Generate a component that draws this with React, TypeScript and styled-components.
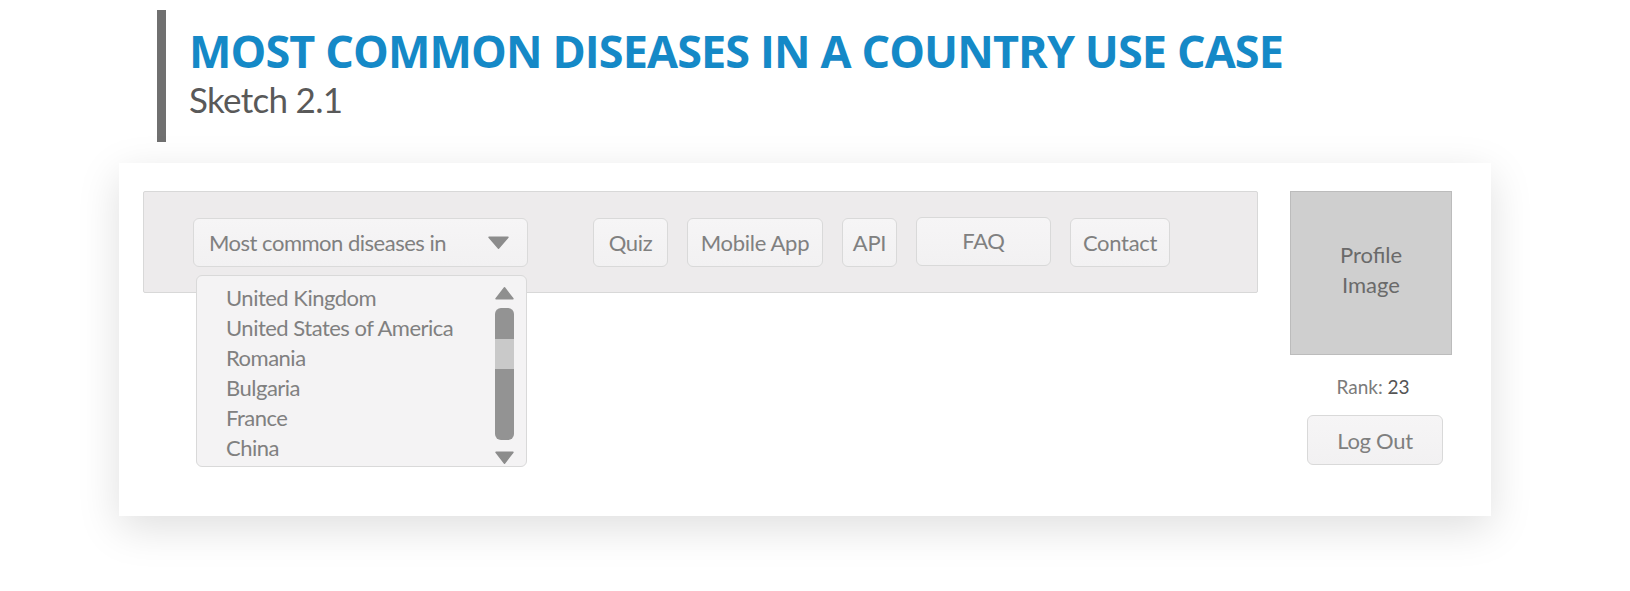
import React from "react";
import styled, { createGlobalStyle } from "styled-components";

const GlobalStyle = createGlobalStyle`
  html, body {
    margin: 0;
    padding: 0;
    background: #ffffff;
  }
  body {
    font-family: Lato, "Open Sans", sans-serif;
    color: #7f7f7f;
  }
  * { box-sizing: border-box; }
`;

const Page = styled.div`
  display: flex;
  flex-direction: column;
  align-items: flex-start;
  padding-top: 10px;
  width: 1630px;
  height: 591px;
  overflow: hidden;
`;

const Header = styled.header`
  margin-left: 157px;
  height: 132px;
  border-left: 9px solid #707070;
  padding-left: 23px;
  display: flex;
  flex-direction: column;
`;

const Title = styled.h1`
  margin: 18px 0 0 0;
  font-family: "Open Sans", sans-serif;
  font-weight: 700;
  font-size: 45px;
  line-height: 46px;
  color: #1589c7;
  letter-spacing: -0.9px;
  white-space: nowrap;
`;

const Subtitle = styled.div`
  margin-top: 8px;
  font-family: Lato, sans-serif;
  font-size: 35px;
  line-height: 35px;
  color: #595959;
  letter-spacing: -0.7px;
`;

const Card = styled.main`
  margin: 21px 0 0 119px;
  width: 1372px;
  height: 353px;
  background: #ffffff;
  box-shadow: 0 12px 40px rgba(0, 0, 0, 0.13);
  padding: 28px 0 0 24px;
  display: flex;
  align-items: flex-start;
  gap: 32px;
`;

const Nav = styled.nav`
  width: 1115px;
  height: 102px;
  background: #edebec;
  border: 1px solid #d8d8d8;
  border-radius: 2px;
  padding: 26px 0 0 49px;
  display: flex;
  align-items: flex-start;
`;

const SelectWrap = styled.div`
  position: relative;
  margin-right: 65px;
`;

const Select = styled.div`
  width: 335px;
  height: 49px;
  background: linear-gradient(#f6f5f6, #f2f1f2);
  border: 1px solid #dadada;
  border-radius: 6px;
  padding: 0 18px 0 15px;
  display: flex;
  align-items: center;
  justify-content: space-between;
  font-size: 22px;
  letter-spacing: -0.5px;
  color: #808080;
`;

const Triangle = styled.svg`
  display: block;
  flex: none;
`;

const DropList = styled.div`
  position: absolute;
  top: 57px;
  left: 3px;
  width: 331px;
  height: 192px;
  background: #f4f3f4;
  border: 1px solid #d9d9d9;
  border-radius: 6px;
  display: flex;
  justify-content: space-between;
  z-index: 2;
`;

const Items = styled.ul`
  list-style: none;
  margin: 0;
  padding: 7px 0 0 29px;
`;

const Item = styled.li`
  font-size: 22px;
  line-height: 30px;
  letter-spacing: -0.5px;
  color: #808080;
  white-space: nowrap;
`;

const ScrollCol = styled.div`
  width: 20px;
  margin-right: 12px;
  padding-top: 11px;
  display: flex;
  flex-direction: column;
  align-items: center;
`;

const Thumb = styled.div`
  margin: 8px 0 11px;
  width: 19px;
  height: 132px;
  border-radius: 6px;
  background: linear-gradient(
    #939393 0px,
    #939393 31px,
    #c9c9c9 31px,
    #c9c9c9 61px,
    #939393 61px,
    #939393 100%
  );
`;

const Buttons = styled.div`
  display: flex;
  gap: 19px;
`;

const NavButton = styled.div<{ $w: number; $lift?: boolean }>`
  width: ${(p) => p.$w}px;
  height: 49px;
  margin-top: ${(p) => (p.$lift ? -1 : 0)}px;
  padding-bottom: ${(p) => (p.$lift ? 3 : 0)}px;
  background: linear-gradient(#f6f5f6, #f2f1f2);
  border: 1px solid #d9d9d9;
  border-radius: 6px;
  display: flex;
  align-items: center;
  justify-content: center;
  font-size: 22px;
  letter-spacing: -0.3px;
  color: #808080;
  white-space: nowrap;
`;

const Side = styled.aside`
  width: 162px;
  display: flex;
  flex-direction: column;
  align-items: center;
`;

const ProfileBox = styled.div`
  width: 162px;
  height: 164px;
  background: #cfcfcf;
  border: 1px solid #bcbcbc;
  display: flex;
  align-items: center;
  justify-content: center;
  text-align: center;
  padding-bottom: 7px;
  font-size: 22px;
  line-height: 30px;
  color: #6a6a6a;
`;

const Rank = styled.div`
  margin-top: 20px;
  font-size: 19px;
  line-height: 24px;
  color: #7b7b7b;
  padding-left: 4px;
`;

const RankValue = styled.span`
  color: #555555;
`;

const LogOut = styled.div`
  margin: 16px 0 0 8px;
  width: 136px;
  height: 50px;
  background: linear-gradient(#f6f5f6, #f2f1f2);
  border: 1px solid #d9d9d9;
  border-radius: 6px;
  display: flex;
  align-items: center;
  justify-content: center;
  font-size: 22px;
  letter-spacing: -0.3px;
  color: #7f7f7f;
`;

const DownTri = ({ w, h }: { w: number; h: number }) => (
  <Triangle width={w} height={h} viewBox={`0 0 ${w} ${h}`}>
    <path
      d={`M1 1.2 L${w - 1} 1.2 L${w / 2} ${h - 0.8} Z`}
      fill="#8c8c8c"
      stroke="#8c8c8c"
      strokeWidth="1.4"
      strokeLinejoin="round"
    />
  </Triangle>
);

const UpTri = ({ w, h }: { w: number; h: number }) => (
  <Triangle width={w} height={h} viewBox={`0 0 ${w} ${h}`}>
    <path
      d={`M1 ${h - 1.2} L${w - 1} ${h - 1.2} L${w / 2} 0.8 Z`}
      fill="#8f8f8f"
      stroke="#8f8f8f"
      strokeWidth="1.4"
      strokeLinejoin="round"
    />
  </Triangle>
);

const countries = [
  "United Kingdom",
  "United States of America",
  "Romania",
  "Bulgaria",
  "France",
  "China",
];

export default function App() {
  return (
    <>
      <GlobalStyle />
      <Page>
        <Header>
          <Title>MOST COMMON DISEASES IN A COUNTRY USE CASE</Title>
          <Subtitle>Sketch 2.1</Subtitle>
        </Header>
        <Card>
          <Nav>
            <SelectWrap>
              <Select>
                <span>Most common diseases in</span>
                <DownTri w={21} h={13} />
              </Select>
              <DropList>
                <Items>
                  {countries.map((c) => (
                    <Item key={c}>{c}</Item>
                  ))}
                </Items>
                <ScrollCol>
                  <UpTri w={19} h={13} />
                  <Thumb />
                  <DownTri w={19} h={13} />
                </ScrollCol>
              </DropList>
            </SelectWrap>
            <Buttons>
              <NavButton $w={75}>Quiz</NavButton>
              <NavButton $w={136}>Mobile App</NavButton>
              <NavButton $w={55}>API</NavButton>
              <NavButton $w={135} $lift>
                FAQ
              </NavButton>
              <NavButton $w={100}>Contact</NavButton>
            </Buttons>
          </Nav>
          <Side>
            <ProfileBox>
              Profile
              <br />
              Image
            </ProfileBox>
            <Rank>
              Rank: <RankValue>23</RankValue>
            </Rank>
            <LogOut>Log Out</LogOut>
          </Side>
        </Card>
      </Page>
    </>
  );
}
